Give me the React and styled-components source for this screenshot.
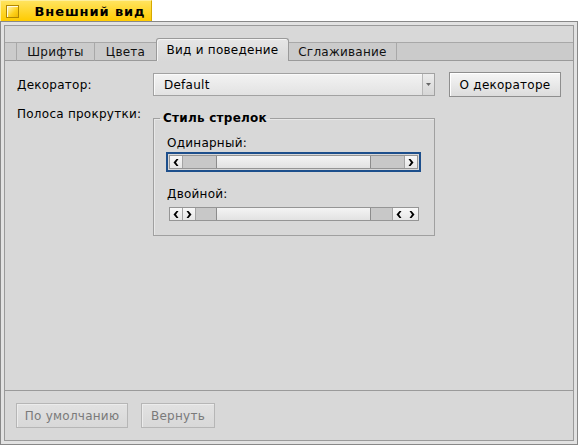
import React from 'react';
import styled, { createGlobalStyle } from 'styled-components';

const Global = createGlobalStyle`
  html, body { margin: 0; padding: 0; background: #fff; }
  body { font-family: "DejaVu Sans", "Noto Sans", sans-serif; font-size: 12px; color: #000; letter-spacing: 0.25px; }
  * { box-sizing: border-box; }
`;

const Page = styled.div`
  width: 578px;
  height: 445px;
  display: flex;
  flex-direction: column;
`;

const TitleTab = styled.div`
  width: 152px;
  height: 21px;
  flex: none;
  display: flex;
  align-items: center;
  padding-left: 5px;
  background: linear-gradient(#ffe35e, #ffcb00);
  border: 1px solid #d6a900;
  border-bottom: none;
  border-left-color: #ffef9a;
  border-top-color: #ffef9a;
`;

const TitleIcon = styled.div`
  width: 13px;
  height: 13px;
  flex: none;
  border: 1px solid #b28700;
  background: linear-gradient(135deg, #fff7c8, #ffd21c 60%, #f0b800);
  box-shadow: inset 1px 1px 0 #fffbe0;
`;

const TitleText = styled.div`
  flex: 1;
  text-align: center;
  font-weight: bold;
  font-size: 13px;
  letter-spacing: 0.9px;
  white-space: nowrap;
  padding-left: 10px;
`;

const Frame = styled.div`
  flex: 1;
  display: flex;
  border: 1px solid #888;
  padding: 3px;
  background: #e2e2e2;
`;

const Inner = styled.div`
  flex: 1;
  display: flex;
  flex-direction: column;
  border: 1px solid #9a9a9a;
  background: #d8d8d8;
`;

const TabStrip = styled.div`
  display: flex;
  align-items: flex-end;
  height: 23px;
  margin-top: 12px;
  flex: none;
`;

const TabPiece = styled.div`
  height: 19px;
  background: #cbcbcb;
  border-top: 1px solid #a8a8a8;
  border-bottom: 1px solid #9a9a9a;
  border-right: 1px solid #a8a8a8;
  width: ${p => p.$w}px;
  flex: ${p => (p.$grow ? 1 : 'none')};
  ${p => p.$grow && 'border-right: none;'}
`;

const Tab = styled.div`
  flex: none;
  height: 19px;
  display: flex;
  align-items: center;
  justify-content: center;
  width: ${p => p.$w}px;
  background: #cbcbcb;
  border-top: 1px solid #a8a8a8;
  border-bottom: 1px solid #9a9a9a;
  border-right: 1px solid #a8a8a8;
  font-size: 12px;
  color: #111;
  white-space: nowrap;
`;

const ActiveTab = styled.div`
  flex: none;
  height: 23px;
  width: ${p => p.$w}px;
  display: flex;
  align-items: center;
  justify-content: center;
  padding-bottom: 1px;
  background: linear-gradient(#e6e6e6, #d8d8d8);
  border: 1px solid #9a9a9a;
  border-bottom: none;
  border-radius: 3px 3px 0 0;
  box-shadow: inset 1px 1px 0 #f4f4f4;
  margin-left: -1px;
  font-size: 12px;
  white-space: nowrap;
`;

const Panel = styled.div`
  flex: 1;
  padding: 11px 12px;
  display: grid;
  grid-template-columns: 136px 282px auto;
  grid-template-rows: 25px auto;
  row-gap: 10px;
  align-content: start;
`;

const Label = styled.div`
  font-size: 12px;
  line-height: 14px;
  white-space: nowrap;
  align-self: ${p => (p.$top ? 'start' : 'center')};
`;

const Select = styled.div`
  height: 23px;
  align-self: center;
  display: flex;
  border: 1px solid #a2a2a2;
  background: linear-gradient(#f3f3f3, #e2e2e2);
  box-shadow: inset 1px 1px 0 #fafafa;
`;

const SelectValue = styled.div`
  flex: 1;
  display: flex;
  align-items: center;
  padding-left: 10px;
  font-size: 12px;
`;

const SelectArrow = styled.div`
  width: 12px;
  border-left: 1px solid #b8b8b8;
  display: flex;
  align-items: center;
  justify-content: center;
  background: linear-gradient(#ececec, #d6d6d6);
`;

const Button = styled.div`
  height: 25px;
  padding: 0 4px;
  display: inline-flex;
  align-items: center;
  justify-content: center;
  white-space: nowrap;
  font-size: 12px;
  border: 1px solid ${p => (p.$disabled ? '#b6b6b6' : '#8e8e8e')};
  background: ${p => (p.$disabled ? 'linear-gradient(#e2e2e2, #d8d8d8)' : 'linear-gradient(#f6f6f6, #dcdcdc)')};
  color: ${p => (p.$disabled ? '#7a7a7a' : '#000')};
  box-shadow: inset 1px 1px 0 ${p => (p.$disabled ? '#ececec' : '#ffffff')};
  width: ${p => (p.$w ? `${p.$w}px` : 'auto')};
`;

const SideButton = styled(Button)`
  margin-left: 14px;
  width: 112px;
`;

const Group = styled.fieldset`
  margin: 4px 0 0 0;
  width: 282px;
  height: 125px;
  padding: 0 13px 0 13px;
  border: 1px solid #a0a0a0;
  box-shadow: inset 1px 1px 0 #e8e8e8;
  min-width: 0;
`;

const Legend = styled.legend`
  font-weight: bold;
  font-size: 12px;
  line-height: 14px;
  padding: 0 3px;
  margin-left: -7px;
  white-space: nowrap;
`;

const FieldLabel = styled.div`
  font-size: 12px;
  line-height: 14px;
  margin-top: ${p => p.$mt}px;
  margin-bottom: ${p => p.$mb}px;
`;

const Focus = styled.div`
  border: 2px solid #1d4f8c;
  padding: 1px;
  margin-left: -1px;
`;

const Bar = styled.div`
  height: 14px;
  display: flex;
  border: 1px solid #959595;
  background: #c6c6c6;
  margin: ${p => (p.$plain ? '0 2px 0 2px' : '0')};
`;

const Arrow = styled.div`
  width: 13px;
  flex: none;
  display: flex;
  align-items: center;
  justify-content: center;
  background: linear-gradient(#f8f8f8, #e6e6e6);
  border-right: ${p => (p.$side === 'l' ? '1px solid #a4a4a4' : 'none')};
  border-left: ${p => (p.$side === 'r' ? '1px solid #a4a4a4' : 'none')};
`;

const Track = styled.div`
  flex: 1;
  display: flex;
  background: #c8c8c8;
`;

const Thumb = styled.div`
  margin-left: ${p => p.$offset}px;
  width: ${p => p.$w}px;
  background: linear-gradient(#f4f4f4, #e2e2e2);
  border-left: 1px solid #8c8c8c;
  border-right: 1px solid #8c8c8c;
`;

const BottomBar = styled.div`
  height: 50px;
  flex: none;
  border-top: 1px solid #9a9a9a;
  display: flex;
  gap: 13px;
  padding: 12px 11px 0 11px;
  align-items: flex-start;
`;

const Chev = ({ dir }) => (
  <svg width="6" height="7" viewBox="0 0 6 7">
    {dir === 'l' ? (
      <polygon points="3.5,0 5.5,0 3,3.5 5.5,7 3.5,7 0.5,3.5" fill="#000" />
    ) : (
      <polygon points="2.5,0 0.5,0 3,3.5 0.5,7 2.5,7 5.5,3.5" fill="#000" />
    )}
  </svg>
);

const Down = () => (
  <svg width="5" height="3" viewBox="0 0 5 3">
    <polygon points="0,0 5,0 2.5,3" fill="#666" />
  </svg>
);

export default function App() {
  return (
    <Page>
      <Global />
      <TitleTab>
        <TitleIcon />
        <TitleText>Внешний вид</TitleText>
      </TitleTab>
      <Frame>
        <Inner>
          <TabStrip>
            <TabPiece $w={12} />
            <Tab $w={78}>Шрифты</Tab>
            <Tab $w={62}>Цвета</Tab>
            <ActiveTab $w={133}>Вид и поведение</ActiveTab>
            <Tab $w={108}>Сглаживание</Tab>
            <TabPiece $grow />
          </TabStrip>
          <Panel>
            <Label>Декоратор:</Label>
            <Select>
              <SelectValue>Default</SelectValue>
              <SelectArrow><Down /></SelectArrow>
            </Select>
            <SideButton>О декораторе</SideButton>
            <Label $top>Полоса прокрутки:</Label>
            <Group>
              <Legend>Стиль стрелок</Legend>
              <FieldLabel $mt={11} $mb={2}>Одинарный:</FieldLabel>
              <Focus>
                <Bar>
                  <Arrow $side="l"><Chev dir="l" /></Arrow>
                  <Track><Thumb $offset={33} $w={155} /></Track>
                  <Arrow $side="r"><Chev dir="r" /></Arrow>
                </Bar>
              </Focus>
              <FieldLabel $mt={15} $mb={6}>Двойной:</FieldLabel>
              <Bar $plain>
                <Arrow $side="l"><Chev dir="l" /></Arrow>
                <Arrow $side="l"><Chev dir="r" /></Arrow>
                <Track><Thumb $offset={20} $w={155} /></Track>
                <Arrow $side="r"><Chev dir="l" /></Arrow>
                <Arrow><Chev dir="r" /></Arrow>
              </Bar>
            </Group>
          </Panel>
          <BottomBar>
            <Button $disabled $w={112}>По умолчанию</Button>
            <Button $disabled $w={74}>Вернуть</Button>
          </BottomBar>
        </Inner>
      </Frame>
    </Page>
  );
}
